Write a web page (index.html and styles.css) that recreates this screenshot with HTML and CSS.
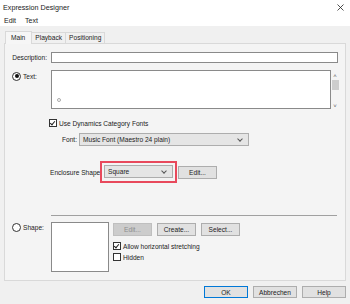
FILE: index.html
```html
<!DOCTYPE html>
<html lang="en">
<head>
    <meta charset="UTF-8">
    <title>Expression Designer</title>
    <link rel="stylesheet" href="styles.css">
</head>
<body>
    <div class="titlebar">
        <span>Expression Designer</span>
        <svg class="close" width="7" height="7" viewBox="0 0 7 7"><path d="M0.5 0.5L6.5 6.5M6.5 0.5L0.5 6.5" stroke="#222" stroke-width="0.8"/></svg>
    </div>
    <div class="menubar">
        <span>Edit</span>
        <span>Text</span>
    </div>

    <div class="tabs">
        <span class="tab active">Main</span>
        <span class="tab">Playback</span>
        <span class="tab">Positioning</span>
    </div>

    <div class="panel">
        <div class="row desc-row">
            <label class="lbl">Description:</label>
            <div class="input"></div>
        </div>

        <div class="row text-row">
            <label class="lbl radio-lbl"><span class="radio on"></span>Text:</label>
            <div class="textarea"><span class="caret"></span></div>
            <div class="vscroll">
                <span class="arrow">&#708;</span>
                <span class="thumb"></span>
                <span class="arrow down">&#709;</span>
            </div>
        </div>

        <div class="row check-row">
            <span class="checkbox on"></span>Use Dynamics Category Fonts
        </div>

        <div class="row font-row">
            <label class="font-lbl">Font:</label>
            <div class="select font-select">Music Font (Maestro 24 plain)<span class="chev"></span></div>
        </div>

        <div class="row encl-row">
            <label class="encl-lbl">Enclosure Shape</label>
            <div class="highlight">
                <div class="select encl-select">Square<span class="chev"></span></div>
            </div>
            <button class="btn edit-btn">Edit...</button>
        </div>

        <div class="separator"></div>

        <div class="row shape-row">
            <label class="lbl radio-lbl"><span class="radio"></span>Shape:</label>
            <div class="shape-box"></div>
            <div class="shape-side">
                <div class="btn-row">
                    <button class="btn disabled">Edit...</button>
                    <button class="btn">Create...</button>
                    <button class="btn">Select...</button>
                </div>
                <div class="small-check first"><span class="checkbox on"></span>Allow horizontal stretching</div>
                <div class="small-check"><span class="checkbox"></span>Hidden</div>
            </div>
        </div>
    </div>

    <div class="footer">
        <button class="btn dlg default">OK</button>
        <button class="btn dlg">Abbrechen</button>
        <button class="btn dlg">Help</button>
    </div>
</body>
</html>
```

FILE: styles.css
```css
body {
    margin: 0;
    background-color: #f0f0f0;
    font-family: "Liberation Sans", Arial, sans-serif;
    font-size: 6.6px;
    color: #222;
    width: 350px;
    height: 304px;
    overflow: hidden;
    white-space: nowrap;
}
.titlebar {
    height: 15px;
    background: white;
    display: flex;
    align-items: center;
    justify-content: space-between;
    padding: 0 6px 0 3px;
    font-size: 7.2px;
}
.menubar {
    height: 11px;
    background: white;
    display: flex;
    align-items: center;
    padding-left: 4px;
    gap: 9px;
    font-size: 7px;
}
.tabs {
    display: flex;
    align-items: flex-end;
    margin: 5px 0 0 5px;
    height: 12px;
    position: relative;
    z-index: 1;
}
.tab {
    height: 10px;
    line-height: 10px;
    padding: 0 3px;
    border: 1px solid #d9d9d9;
    border-bottom: none;
    background: #f0f0f0;
    margin-left: -1px;
}
.tab.active {
    height: 12px;
    line-height: 11px;
    background: #f6f6f6;
    margin-left: 0;
    padding: 0 6px 0 5px;
    margin-bottom: -1px;
}
.panel {
    margin: 0 4px;
    height: 236px;
    border: 1px solid #d9d9d9;
    background: #f4f4f4;
}
.row {
    display: flex;
}
.lbl {
    width: 42px;
    text-align: right;
    padding-right: 4px;
}
.input, .textarea, .shape-box {
    background: white;
    border: 1px solid #8a8a8a;
    box-sizing: border-box;
}
.desc-row {
    margin-top: 8px;
    align-items: center;
    height: 11px;
}
.input {
    width: 287px;
    height: 11px;
}
.text-row {
    margin-top: 7px;
    height: 39px;
}
.radio-lbl {
    text-align: left;
    display: flex;
    align-items: center;
    height: 12px;
    padding-left: 7px;
    width: 35px;
}
.radio {
    width: 7px;
    height: 7px;
    border: 1px solid #333;
    border-radius: 50%;
    background: white;
    margin-right: 2px;
    position: relative;
    flex: none;
}
.radio.on::after {
    content: "";
    position: absolute;
    left: 1.5px;
    top: 1.5px;
    width: 4px;
    height: 4px;
    border-radius: 50%;
    background: #111;
}
.textarea {
    width: 280px;
    height: 39px;
    position: relative;
}
.caret {
    position: absolute;
    left: 5px;
    top: 27px;
    width: 2px;
    height: 2px;
    border: 1px solid #aaa;
    border-radius: 50%;
}
.vscroll {
    width: 8px;
    display: flex;
    flex-direction: column;
    align-items: center;
    color: #555;
    font-size: 6px;
    line-height: 6px;
}
.vscroll .arrow {
    height: 6px;
    margin-top: 3px;
}
.vscroll .thumb {
    width: 7px;
    height: 10px;
    background: #cdcdcd;
    margin-top: 1px;
}
.vscroll .down {
    margin-top: 13px;
}
.checkbox {
    width: 6px;
    height: 6px;
    border: 1px solid #333;
    background: white;
    margin-right: 2px;
    position: relative;
    flex: none;
}
.checkbox.on::after {
    content: "";
    position: absolute;
    left: 1px;
    top: 0px;
    width: 2px;
    height: 4px;
    border: solid #222;
    border-width: 0 1px 1px 0;
    transform: rotate(40deg);
}
.check-row {
    margin: 10px 0 0 44px;
    align-items: center;
    height: 8px;
}
.font-row {
    margin-top: 6px;
    align-items: center;
    height: 13px;
}
.font-lbl {
    margin-left: 57px;
    width: 17px;
}
.select {
    height: 13px;
    box-sizing: border-box;
    background: #e5e5e5;
    border: 1px solid #adadad;
    display: flex;
    align-items: center;
    padding-left: 3px;
    position: relative;
}
.chev {
    position: absolute;
    right: 6px;
    top: 3px;
    width: 3px;
    height: 3px;
    border: solid #555;
    border-width: 0 1px 1px 0;
    transform: rotate(45deg);
}
.font-select {
    width: 170px;
}
.encl-row {
    margin-top: 15px;
    align-items: center;
    height: 22px;
}
.encl-lbl {
    margin-left: 45px;
    width: 50px;
}
.highlight {
    width: 77px;
    height: 22px;
    box-sizing: border-box;
    border: 2px solid #e8495c;
    padding: 2px;
}
.encl-select {
    width: 69px;
}
.btn {
    font: inherit;
    color: #222;
    height: 13px;
    padding: 0;
    background: #e1e1e1;
    border: 1px solid #adadad;
    border-radius: 0;
    box-sizing: border-box;
}
.edit-btn {
    width: 39px;
    margin-left: 1px;
}
.btn.disabled {
    color: #8d8d8d;
    background: #cccccc;
    border-color: #bfbfbf;
}
.separator {
    margin: 32px 0 0 46px;
    width: 286px;
    height: 1px;
    background: #a0a0a0;
}
.shape-row {
    margin-top: 6px;
}
.shape-row .radio-lbl {
    height: 11px;
}
.shape-box {
    width: 58px;
    height: 50px;
}
.shape-side {
    margin-left: 4px;
    margin-top: 1px;
}
.btn-row {
    display: flex;
    gap: 5px;
}
.btn-row .btn {
    width: 39px;
}
.small-check {
    display: flex;
    align-items: center;
    height: 8px;
    margin-top: 3px;
}
.small-check.first {
    margin-top: 6px;
}
.footer {
    display: flex;
    justify-content: flex-end;
    gap: 5px;
    margin: 5px 4px 0 0;
}
.btn.dlg {
    width: 44px;
    height: 12px;
}
.btn.default {
    border-color: #0078d7;
}
```
